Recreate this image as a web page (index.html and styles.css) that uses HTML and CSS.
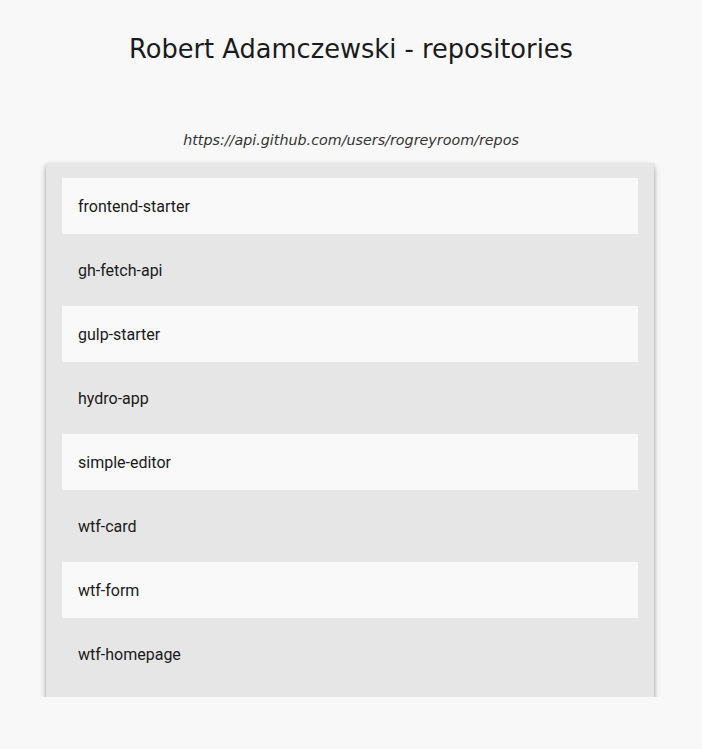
FILE: index.html
```html
<!DOCTYPE html>
<html>
<head>
<meta charset="utf-8">
<link rel="stylesheet" href="styles.css">
</head>
<body>
<h1 class="title">Robert Adamczewski - repositories</h1>
<p class="source">https://api.github.com/users/rogreyroom/repos</p>
<ul class="repos">
  <li class="repo">frontend-starter</li>
  <li class="repo">gh-fetch-api</li>
  <li class="repo">gulp-starter</li>
  <li class="repo">hydro-app</li>
  <li class="repo">simple-editor</li>
  <li class="repo">wtf-card</li>
  <li class="repo">wtf-form</li>
  <li class="repo">wtf-homepage</li>
</ul>
</body>
</html>
```
FILE: styles.css
```css
html, body {
  margin: 0;
  padding: 0;
  background: #f8f8f8;
}
body {
  padding-top: 32px;
  color: #1a1a1a;
}
.title {
  margin: 0;
  font-family: "DejaVu Sans", sans-serif;
  font-weight: normal;
  font-size: 25.7px;
  line-height: 34px;
  height: 34px;
  text-align: center;
  color: #1b1b1b;
}
.source {
  margin: 64px 0 0;
  font-family: "DejaVu Sans", sans-serif;
  font-style: italic;
  font-size: 14.3px;
  line-height: 20px;
  text-align: center;
  color: #333;
}
.repos {
  list-style: none;
  margin: 13px 0 0 46px;
  padding: 15px 16px;
  width: 576px;
  display: flex;
  flex-direction: column;
  gap: 8px;
  background: #e6e6e6;
  box-shadow: 0 4px 6px rgba(0,0,0,0.3), 0 1px 3px rgba(0,0,0,0.14);
}
.repo {
  height: 56px;
  display: flex;
  align-items: center;
  padding: 0 16px;
  font-family: Roboto, sans-serif;
  font-size: 16px;
  color: #1a1a1a;
}
.repo:nth-child(odd) {
  background: #f9f9f9;
}
```
